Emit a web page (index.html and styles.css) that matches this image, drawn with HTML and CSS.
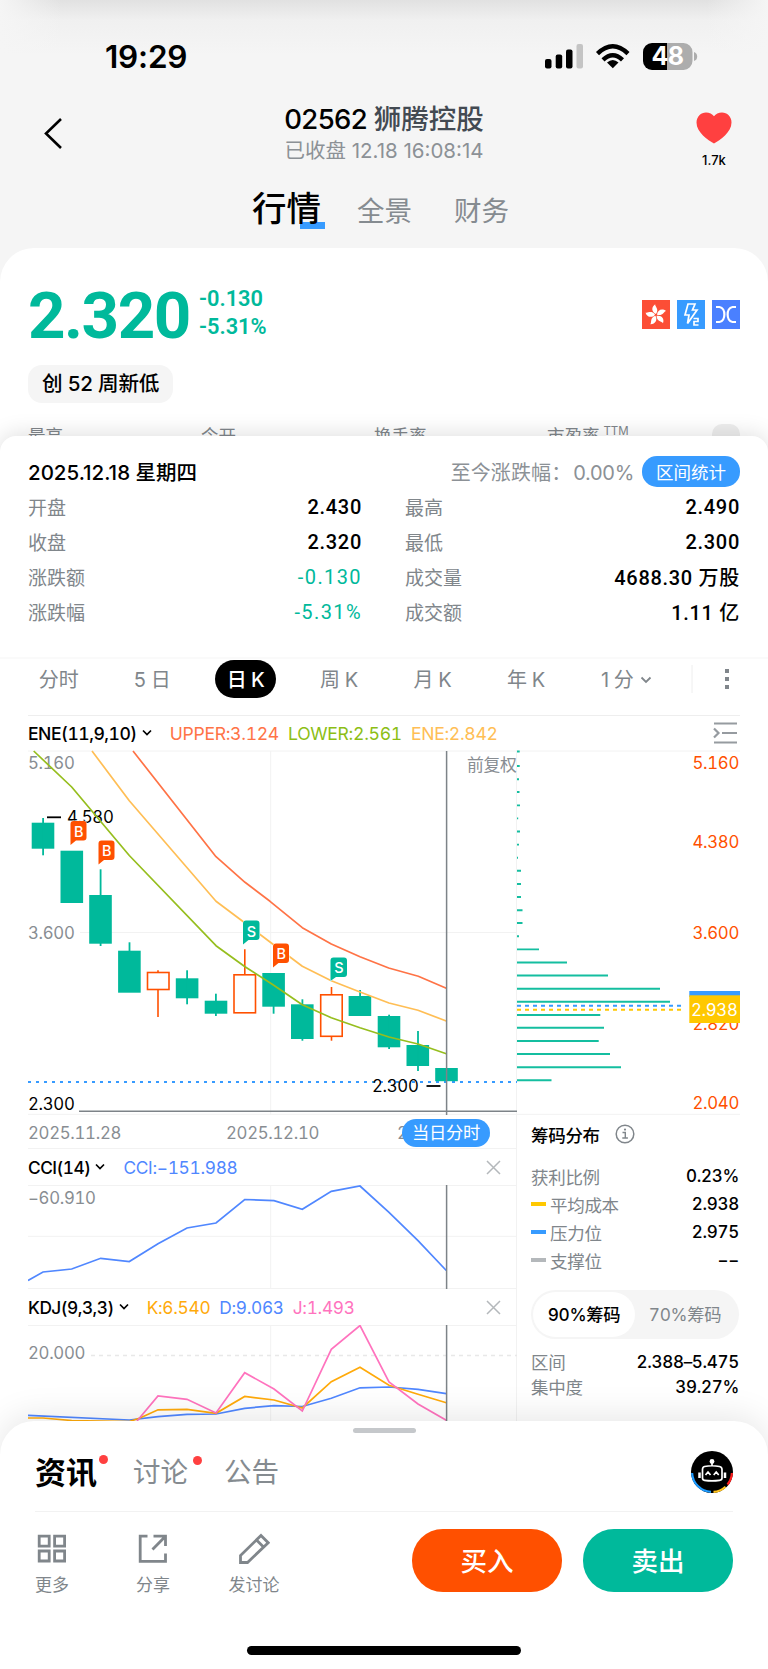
FILE: index.html
```html
<!DOCTYPE html>
<html lang="zh-CN">
<head>
<meta charset="UTF-8"/>
<meta name="viewport" content="width=device-width,initial-scale=1"/>
<title>02562 狮腾控股</title>
<link rel="stylesheet" href="styles.css">
</head>
<body>
<header class="top">
  <div class="status">
    <span class="clock">19:29</span>
    <svg class="status-icons" width="154" height="30" viewBox="544 42 154 30">
      <rect x="545" y="59" width="6.5" height="9.5" rx="2"/>
      <rect x="555.7" y="54.5" width="6.5" height="14" rx="2"/>
      <rect x="566" y="49.5" width="6.5" height="19" rx="2"/>
      <rect x="576.5" y="44" width="6.5" height="24.5" rx="2" fill="#c4c4c4"/>
      <g fill="none" stroke="#000" stroke-width="4.4">
        <path d="M597.5 53.6Q612.8 39 628 53.6"/>
        <path d="M603 59.8Q612.8 50.6 622.5 59.8"/>
      </g>
      <path d="M612.8 68.3L607 62.6Q612.8 57.6 618.5 62.6Z"/>
      <path d="M667 43H652a9 9 0 0 0-9 9v9a9 9 0 0 0 9 9h15z"/>
      <path d="M667 43h16.500a9 9 0 0 1 9 9v9a9 9 0 0 1-9 9H667zM694 52q3.200 1 3.200 4.500t-3.200 4.500z" fill="#adadad"/>
      <text x="667.500" y="65" class="batt">48</text>
    </svg>
  </div>
  <div class="nav">
    <svg class="back" width="20" height="34" viewBox="0 0 20 34"><path d="M18 3L3 17.500L18 32" fill="none" stroke="#000" stroke-width="2.600"/></svg>
    <div class="title">
      <h1>02562 <b>狮腾控股</b></h1>
      <p>已收盘 12.18 16:08:14</p>
    </div>
    <div class="fav">
      <svg width="36" height="32" viewBox="0 0 36 32"><path d="M18 31.500C12 28 .5 20.500.5 10.500C.5 4.500 5 .5 10 .5c3.500 0 6.200 1.600 8 3.800C19.800 2.100 22.500.5 26 .5c5 0 9.500 4 9.500 10C35.500 20.500 24 28 18 31.500z" fill="#ff4040"/></svg>
      <span>1.7k</span>
    </div>
  </div>
  <nav class="pages">
    <span class="on">行情</span><span>全景</span><span>财务</span>
  </nav>
</header>

<section class="quote">
  <div class="price-row">
    <div class="price">2.320</div>
    <div class="chg"><span>-0.130</span><span>-5.31%</span></div>
    <div class="marks">
      <svg width="28" height="29" viewBox="0 0 28 29"><rect width="28" height="29" fill="#fc4e36"/>
        <g fill="#fff">
          <path d="M14 14C9.500 12 9 7 13.200 4.200C12.800 6.500 17.500 9 14 14z"/>
          <path d="M14 14C9.500 12 9 7 13.200 4.200C12.800 6.500 17.500 9 14 14z" transform="rotate(72 14 15)"/>
          <path d="M14 14C9.500 12 9 7 13.200 4.200C12.800 6.500 17.500 9 14 14z" transform="rotate(144 14 15)"/>
          <path d="M14 14C9.500 12 9 7 13.200 4.200C12.800 6.500 17.500 9 14 14z" transform="rotate(216 14 15)"/>
          <path d="M14 14C9.500 12 9 7 13.200 4.200C12.800 6.500 17.500 9 14 14z" transform="rotate(288 14 15)"/>
        </g></svg>
      <svg width="28" height="29" viewBox="0 0 28 29"><rect width="28" height="29" fill="#379bff"/>
        <path d="M11 4h7l-2.500 6H20L10.500 23.500L12 15H8z" fill="none" stroke="#fff" stroke-width="1.700"/>
        <path d="M16.500 18.500h4.500v3h-4v3.500h4.500" fill="none" stroke="#fff" stroke-width="1.700"/></svg>
      <svg width="28" height="29" viewBox="0 0 28 29"><rect width="28" height="29" fill="#4a80ff"/>
        <path d="M4 7h3.500c6.500 1 6.500 14 0 15H4M24 7h-3.500c-6.500 1-6.500 14 0 15H24" fill="none" stroke="#fff" stroke-width="2.200"/></svg>
    </div>
  </div>
  <span class="tag">创 52 周新低</span>
  <div class="stats"><span>最高</span><span>今开</span><span>换手率</span><span>市盈率 <sup>TTM</sup></span><i></i></div>
</section>

<section class="detail">
  <div class="day">
    <strong>2025.12.18 星期四</strong>
    <span class="since">至今涨跌幅：<em>0.00%</em></span>
    <button class="range">区间统计</button>
  </div>
  <dl class="ohlc">
    <div><dt>开盘</dt><dd>2.430</dd></div>
    <div><dt>最高</dt><dd>2.490</dd></div>
    <div><dt>收盘</dt><dd>2.320</dd></div>
    <div><dt>最低</dt><dd>2.300</dd></div>
    <div><dt>涨跌额</dt><dd class="down">-0.130</dd></div>
    <div><dt>成交量</dt><dd>4688.30 万股</dd></div>
    <div><dt>涨跌幅</dt><dd class="down">-5.31%</dd></div>
    <div><dt>成交额</dt><dd>1.11 亿</dd></div>
  </dl>
</section>

<nav class="period">
  <span>分时</span><span>5 日</span><span class="on">日 K</span><span>周 K</span><span>月 K</span><span>年 K</span>
  <span class="minute">1 分<svg width="12" height="8" viewBox="0 0 12 8"><path d="M1.500 1.500L6 6l4.500-4.500" fill="none" stroke="#80868b" stroke-width="1.800"/></svg></span>
  <svg class="more" width="40" height="30" viewBox="0 0 40 30"><path d="M1 1v28" stroke="#eee"/><g fill="#80868b"><rect x="34" y="5" width="4" height="4"/><rect x="34" y="13" width="4" height="4"/><rect x="34" y="21" width="4" height="4"/></g></svg>
</nav>

<section class="kline">
  <div class="legend ene">
    <span class="name">ENE(11,9,10)</span>
    <svg width="10" height="8" viewBox="0 0 10 8"><path d="M1 1.500l4 4 4-4" fill="none" stroke="#000" stroke-width="1.700"/></svg>
    <span class="upper">UPPER:3.124</span><span class="lower">LOWER:2.561</span><span class="mid">ENE:2.842</span>
    <svg class="fold" width="25" height="22" viewBox="0 0 25 22"><path d="M1 1.500h23M9 11h15M1 20.500h23M1 6.500L5.500 11L1 15.500" fill="none" stroke="#969ba0" stroke-width="2.200"/></svg>
  </div>

  <div class="panes">
    <div class="left">
      <svg class="plot" width="489" height="365" viewBox="28 750 489 365">
        <path class="grid" d="M28 751H517M80 932.500H517M28 1114.300H517M270.700 751V1115"/>
        <text class="ax" x="28" y="769">5.160</text>
        <text class="ax" x="28" y="938.500">3.600</text>
        <text class="ax" x="516.500" y="770.500" text-anchor="end">前复权</text>
        <text class="ax dark" x="67" y="823">4.580</text>
        <path d="M47 817.300h14" stroke="#000" stroke-width="1.800"/>
        <!-- falling candles -->
        <g fill="#00b99b">
          <rect x="31.7" y="822.7" width="22.600" height="26"/><rect x="42.200" y="818" width="1.800" height="37.300"/>
          <rect x="60.500" y="850.700" width="22.600" height="52.300"/>
          <rect x="89.200" y="895" width="22.600" height="48.700"/><rect x="99.700" y="869.300" width="1.800" height="76.700"/>
          <rect x="118.100" y="950.700" width="22.600" height="42"/><rect x="128.600" y="942.300" width="1.800" height="10"/>
          <rect x="175.800" y="978.300" width="22.600" height="20"/><rect x="186.200" y="970.300" width="1.800" height="34"/>
          <rect x="204.700" y="1000.700" width="22.600" height="13"/><rect x="215" y="993.700" width="1.800" height="22.300"/>
          <rect x="262.300" y="973" width="22.600" height="33.700"/><rect x="272.700" y="1006" width="1.800" height="7.700"/>
          <rect x="291" y="1004.300" width="22.600" height="34.700"/><rect x="301.500" y="999.300" width="1.800" height="41.400"/>
          <rect x="348.600" y="996" width="22.600" height="20"/><rect x="359.200" y="990" width="1.800" height="7"/>
          <rect x="377.700" y="1016" width="22.600" height="31.300"/><rect x="388.200" y="1014.700" width="1.800" height="34.300"/>
          <rect x="406.500" y="1045" width="22.600" height="21"/><rect x="417.100" y="1031" width="1.800" height="40"/>
        </g>
        <!-- rising candles -->
        <g fill="#fff" stroke="#ff5000" stroke-width="1.600">
          <path d="M158 970.300V1017"/><rect x="147.500" y="972.500" width="21.500" height="17"/>
          <path d="M244.800 949.300V975"/><rect x="234" y="974.800" width="21.500" height="38"/>
          <path d="M331.500 987V1040.700"/><rect x="320.700" y="994.800" width="21.500" height="41.500"/>
        </g>
        <path d="M28 1082H517" stroke="#379bff" stroke-width="2" stroke-dasharray="3 5"/>
        <rect x="435.200" y="1068" width="22.600" height="13.200" fill="#00b99b"/>
        <g fill="none" stroke-width="1.700" stroke-linejoin="round">
          <path stroke="#ff7346" d="M133 751L216 856.700L245 882.300L270 901.300L302.300 927.700L331.300 944L360 956.700L388.700 968L418.300 976.300L446.300 988.300"/>
          <path stroke="#ffbe55" d="M92 751L129.300 800.700L216 901.300L245 923L270 942L302.300 966.300L331.300 980.700L360 992L389 1003L418 1010.300L446.300 1021"/>
          <path stroke="#96be1e" d="M33.700 751L71.700 787L129.300 855.500L216 945.700L245 966.700L273 984.700L302.300 1004.700L331.300 1017.700L360 1027.700L389 1037L418 1044L446.300 1053.700"/>
        </g>
        <!-- trade markers -->
        <g class="mk">
          <path class="buy" d="M70.500 845V824q0-3 3-3h10q3 0 3 3v13.500q0 3-3 3h-7.500z"/><text x="78.700" y="836.500">B</text>
          <path class="buy" d="M98.500 864.500V843.500q0-3 3-3h10q3 0 3 3v13.500q0 3-3 3h-7.500z"/><text x="106.700" y="856">B</text>
          <path class="sell" d="M243 944.500V923.500q0-3 3-3h10.500q3 0 3 3v13.500q0 3-3 3h-8z"/><text x="251.300" y="936.500">S</text>
          <path class="buy" d="M273 967.500V946.500q0-3 3-3h10q3 0 3 3v13.500q0 3-3 3h-7.500z"/><text x="281.200" y="959">B</text>
          <path class="sell" d="M330.500 981V960.500q0-3 3-3h10.500q3 0 3 3v13.500q0 3-3 3h-8z"/><text x="338.800" y="973">S</text>
        </g>
        <path class="cross" d="M446.600 751V1115M79 1111.300H517"/>
        <text class="ax dark" x="372" y="1092">2.300</text>
        <path d="M426.500 1086h14" stroke="#000" stroke-width="1.800"/>
        <text class="ax dark" x="28" y="1109.500">2.300</text>
      </svg>
      <div class="dates"><span>2025.11.28</span><span>2025.12.10</span><span>2025.12.18</span><b>当日分时</b></div>

      <div class="legend">
        <span class="name">CCI(14)</span>
        <svg width="10" height="8" viewBox="0 0 10 8"><path d="M1 1.500l4 4 4-4" fill="none" stroke="#000" stroke-width="1.700"/></svg>
        <span class="blue">CCI:−151.988</span>
        <svg class="close" width="15" height="15" viewBox="0 0 15 15"><path d="M1 1l13 13M14 1L1 14" stroke="#b4b8bb" stroke-width="1.500"/></svg>
      </div>
      <svg class="plot" width="489" height="104" viewBox="28 1185 489 104">
        <path class="grid" d="M28 1185.500H517M28 1236.300H517M28 1288.500H517M270.700 1185V1289"/>
        <text class="ax" x="28" y="1203.500">−60.910</text>
        <path fill="none" stroke="#5087ff" stroke-width="1.700" d="M28 1280.500L43 1272L71.700 1269L100.700 1258.300L129.300 1261.500L158 1243.700L187 1228L216 1223L244.700 1199.500L274 1200.700L302.300 1209.300L331.300 1191.300L360 1186L389 1212.300L418 1240.700L446.300 1270.500"/>
        <path class="cross" d="M446.600 1185V1289"/>
      </svg>

      <div class="legend kdj">
        <span class="name">KDJ(9,3,3)</span>
        <svg width="10" height="8" viewBox="0 0 10 8"><path d="M1 1.500l4 4 4-4" fill="none" stroke="#000" stroke-width="1.700"/></svg>
        <span class="k">K:6.540</span><span class="blue">D:9.063</span><span class="j">J:1.493</span>
        <svg class="close" width="15" height="15" viewBox="0 0 15 15"><path d="M1 1l13 13M14 1L1 14" stroke="#b4b8bb" stroke-width="1.500"/></svg>
      </div>
      <svg class="plot" width="489" height="96" viewBox="28 1325 489 96">
        <path class="grid" d="M28 1325.500H517M270.700 1325V1421"/>
        <path d="M91 1355.500H517" stroke="#e8e8e8" stroke-width="1.300" stroke-dasharray="4 4"/>
        <text class="ax" x="28" y="1359">20.000</text>
        <g fill="none" stroke-width="1.700">
          <path stroke="#5087ff" d="M28 1415.300L129.300 1420L158 1416.700L187 1414.300L216 1414L244.700 1408.300L274 1405.700L302.300 1406.500L331.300 1398.300L360 1387.800L389 1387L418 1389.300L446.300 1393.700"/>
          <path stroke="#ffaa0a" d="M28 1418L43 1418L71.700 1420.500L129.300 1421.500L140 1418L158 1409.800L187 1409.300L216 1413.300L244.700 1396.500L274 1400L302.300 1408L331.300 1381.700L360 1367.300L389 1385.300L418 1394.300L446.300 1402.700"/>
          <path stroke="#ff73be" d="M137 1421L158 1396L187 1399.300L216 1413L244.700 1372.700L274 1389L302.300 1411L331.300 1349.300L360 1325.500L389 1382L418 1404L446.300 1420.300"/>
        </g>
        <path class="cross" d="M446.600 1325V1421"/>
      </svg>
    </div>

    <aside class="right">
      <svg class="plot" width="223" height="365" viewBox="517 750 223 365">
        <path class="grid" d="M517 751H740M517 1114.300H740"/>
        <!-- cost distribution -->
        <path stroke="#14bea0" stroke-width="1.900" d="M517 751.500h2.700M517 766h2.700M517 779.300h2M517 792h2.500M517 805.400h3M517 818.400h1.200M517 831.500h3M517 844.600h2M517 857.700h1M517 870.800h4M517 884h4M517 897h4M517 910.300h5.500M517 923h5.500M517 936.300h2M517 949.400h22M517 962.500h50M517 975.500h91M517 988.700h143M517 1001.800h153M517 1015h83.300M517 1027.800h87M517 1041h81.700M517 1054h93M517 1067.300h104M517 1080.200h34.500"/>
        <path stroke="#379bff" stroke-width="2" stroke-dasharray="4 4" d="M517 1005.800H685"/>
        <path stroke="#ffc800" stroke-width="2" stroke-dasharray="4 4" d="M517 1009.800H685"/>
        <g class="scale">
          <text x="739" y="769">5.160</text><text x="739" y="847.500">4.380</text><text x="739" y="938.500">3.600</text>
          <text x="739" y="1029.500">2.820</text><text x="739" y="1109">2.040</text>
        </g>
        <rect x="689.300" y="991" width="50.700" height="6" fill="#379bff"/>
        <rect x="689.300" y="995.300" width="50.700" height="27.700" fill="#ffc800"/>
        <text class="avg" x="737.500" y="1015.500">2.938</text>
      </svg>
      <div class="chips">
        <h3>筹码分布
          <svg width="20" height="20" viewBox="0 0 20 20"><circle cx="10" cy="10" r="8.800" fill="none" stroke="#80868b" stroke-width="1.500"/><path d="M7.500 8.500h2.800v5.500M7.300 14h5.600" fill="none" stroke="#80868b" stroke-width="1.400"/><circle cx="10" cy="5.600" r="1.100" fill="#80868b"/></svg>
        </h3>
        <ul>
          <li>获利比例<b>0.23%</b></li>
          <li><i class="y"></i>平均成本<b>2.938</b></li>
          <li><i class="b"></i>压力位<b>2.975</b></li>
          <li><i class="g"></i>支撑位<b>−−</b></li>
        </ul>
        <div class="seg"><span class="on">90%筹码</span><span>70%筹码</span></div>
        <ul class="tight">
          <li>区间<b>2.388–5.475</b></li>
          <li>集中度<b>39.27%</b></li>
        </ul>
      </div>
    </aside>
  </div>
</section>

<footer class="sheet">
  <div class="grip"></div>
  <div class="feeds">
    <span class="on dot">资讯</span><span class="dot">讨论</span><span>公告</span>
    <svg width="42" height="42" viewBox="0 0 42 42">
      <circle cx="21" cy="21" r="21"/>
      <g fill="none" stroke-width="2.200">
        <path stroke="#1e9bff" d="M1.100 22A19.900 19.900 0 0 0 20 40.900"/>
        <path stroke="#ffc31e" d="M22.500 40.900A19.900 19.900 0 0 0 34.500 35.700"/>
        <path stroke="#ff1e1e" d="M36.500 33.500A19.900 19.900 0 0 0 40.900 22"/>
      </g>
      <g fill="none" stroke="#fff" stroke-width="1.700">
        <path d="M13.500 15.500Q21 14 28.500 15.500Q31 16 31 18.500V27Q31 29 28.500 29.300Q21 30.300 13.500 29.300Q11.500 29 11.500 27V18.500Q11.500 16 13.500 15.500zM21 15V11M14.500 24l2.500-3 2.500 3M22.700 24l2.500-3 2.500 3"/>
        <path d="M8.500 21.500v5.500M34 21.500v5.500" stroke-width="2.500"/>
      </g>
      <circle cx="21" cy="10.500" r="2.400" fill="#fff"/>
    </svg>
  </div>
  <div class="actions">
    <div class="act"><svg width="32" height="32" viewBox="0 0 32 32"><path d="M3.200 3.200h10v10h-10zM18.600 3.200h10v10h-10zM3.200 18h10v10h-10zM18.600 18h10v10h-10z"/></svg>更多</div>
    <div class="act"><svg width="32" height="32" viewBox="0 0 32 32"><path d="M10.500 3.200H3.200V28.300H28.500V20.500M16.500 3.200h12V13M28.500 3.200L15.500 16.500"/></svg>分享</div>
    <div class="act"><svg width="32" height="32" viewBox="0 0 32 32"><path d="M23 2.500l7.200 7.200L9.500 29.500H2.500V22.500zM18.500 7l7 7"/></svg>发讨论</div>
    <button class="buy-btn">买入</button>
    <button class="sell-btn">卖出</button>
  </div>
  <div class="home"></div>
</footer>
</body>
</html>
```

FILE: styles.css
```css
*{box-sizing:border-box;margin:0;padding:0}
body{width:768px;height:1669px;overflow:hidden;background:#f5f5f5;font-family:Inter,"Noto Sans CJK SC",sans-serif;color:#000}
svg{display:block;flex:none}
button{border:none;font-family:inherit}
span,b,strong,dt,dd,p,h1,h3,li,button{white-space:nowrap}

.top{height:248px;background:linear-gradient(90deg,#f5f5f5,rgba(245,245,245,0) 8%,rgba(245,245,245,0) 92%,#f5f5f5),linear-gradient(#e1e1e1,#f0f0f0 20px,#f5f5f5 55px)}
.status{height:88px;padding:42px 70px 0 105px;display:flex;justify-content:space-between}
.clock{font-size:31.500px;font-weight:600;line-height:30px;letter-spacing:-.2px}
.batt{font-size:25px;font-weight:700;fill:#fff;text-anchor:middle;letter-spacing:-.5px}
.nav{height:84px;padding:0 29px 0 43px;display:flex;align-items:flex-start}
.back{margin-top:28px}
.title{flex:1;text-align:center;padding:12px 0 0 16px}
.title h1{font-size:27.5px;line-height:38px;font-weight:500;letter-spacing:-.6px}
.title h1 b{font-weight:500;color:#434a52;letter-spacing:0}
.title p{font-size:20.500px;line-height:26px;color:#8c9196}
.fav{width:50px;margin-top:24px;display:flex;flex-direction:column;align-items:center}
.fav span{font-size:13px;line-height:16px;font-weight:500;margin-top:8px}
.pages{height:76px;display:flex;align-items:baseline;padding:14px 0 0 252px;font-size:27.500px;line-height:46px;color:#858b90}
.pages span{margin-right:42px}
.pages .on{font-size:34.500px;font-weight:500;color:#000;margin-right:32px;padding-right:4px;background:linear-gradient(#379bff,#379bff) 100% 36px/25px 7px no-repeat}

.quote{height:210px;margin-bottom:-22px;background:#fff;border-radius:34px 34px 0 0;padding:35px 28px 0}
.price-row{display:flex;height:66px}
.price{width:171px;font:700 65.500px/66px Roboto;letter-spacing:-1.500px;color:#00b99b}
.chg{display:flex;flex-direction:column;font:600 21.800px/28px Roboto;color:#00b99b;padding-top:2px}
.marks{display:flex;gap:7px;margin:17px 0 0 auto}
.tag{display:inline-block;height:38px;margin-top:16px;padding:0 14px;border-radius:14px;background:#f5f5f5;font-size:20.600px;line-height:38px;font-weight:500;letter-spacing:-.2px}
.stats{display:grid;grid-template-columns:173px 173px 173px 1fr 28px;height:28px;margin-top:17px;font-size:17.500px;line-height:31px;color:#80868b}
.stats sup{font-size:11.500px;line-height:0;vertical-align:7px;margin-left:-1px}
.stats i{height:30px;background:#eee;border-radius:10px;margin-top:4px}

.detail{position:relative;height:221px;background:#fff;border-radius:16px 16px 0 0;padding:19px 28px 0;box-shadow:0 -2px 22px rgba(0,0,0,.13)}
.day{display:flex;align-items:center;height:32px}
.day strong{font-size:20.500px;font-weight:500}
.since{margin-left:auto;font-size:20px;color:#8c9196;letter-spacing:.1px}
.since em{font-style:normal;letter-spacing:-.3px;margin-left:2px}
.range{width:98px;height:31px;margin-left:8px;border-radius:15px;background:#379bff;color:#fff;font-size:17.500px}
.ohlc{display:grid;grid-template-columns:334px 335px;column-gap:43px;grid-auto-rows:35px;margin-top:2px}
.ohlc div{display:flex;justify-content:space-between;align-items:center;font-size:19px}
.ohlc dt{color:#80868b}
.ohlc dd{font:500 20px Roboto,"Noto Sans CJK SC";letter-spacing:.7px}
.ohlc .down{color:#00b99b;font-weight:400;letter-spacing:1.400px}

.period{position:relative;display:flex;align-items:center;height:58px;padding:0 20px 17px 12px;background:#fff;border-top:2px solid #fafafa;font-size:20px;color:#80868b}
.period span{width:93.500px;display:flex;align-items:center;justify-content:center;white-space:pre;word-spacing:-1px}
.period span svg{margin:3px 0 0 6px}
.period .minute{justify-content:flex-end;width:79px}
.period .on{width:61px;height:38px;margin:0 16.200px;border-radius:19px;background:#000;color:#fff;font-weight:500}
.more{margin:0 17px 0 auto}

.kline{height:740px;margin-bottom:-34px;background:#fff;padding:0 28px;font-variant-numeric:tabular-nums;letter-spacing:-.3px}
.legend{display:flex;align-items:center;height:36px;font-size:17.300px}
.legend .name{margin-right:5px;font-weight:500;letter-spacing:-.5px}
.legend.ene{height:35px;border-top:1px solid #eee;font-size:17.600px}
.legend svg+span{margin-left:18px}
.legend span+span{margin-left:9px}
.fold,.close{margin-left:auto}
.fold{margin-right:2px}
.close{margin-right:15px}
.upper{color:#ff7346}
.lower{color:#8cbe14}
.mid{color:#ffbe55}
.blue{color:#5087ff}
.k{color:#ffaa0a}
.j{color:#ff73be}

.panes{display:flex;height:671px}
.left{width:489px;border-right:1px solid #f2f2f2}
.right{width:223px}
.grid{stroke:#f2f2f2;fill:none}
.ax{font-size:16.800px;fill:#888d92}
.ax.dark{fill:#000}
.cross{stroke:#7d8388;stroke-width:1.500;fill:none}
.buy{fill:#ff5000}
.sell{fill:#00b99b}
.mk path{stroke:#fff;stroke-width:1;paint-order:stroke}
.mk text{font-size:14.500px;font-weight:500;fill:#fff;text-anchor:middle}
.scale text{font-size:16.800px;fill:#ff5000;text-anchor:end}
.avg{font-size:16.800px;fill:#fff;text-anchor:end}
.dates{position:relative;display:grid;grid-template-columns:198px 171px 1fr;height:34px;border-bottom:1px solid #f2f2f2;font-size:16.800px;line-height:36px;color:#888d92}
.dates b{position:absolute;left:374px;top:4px;width:88px;height:28px;border-radius:14px;background:#379bff;color:#fff;font-size:17.300px;line-height:28px;font-weight:400;text-align:center}

.chips{padding:3px 1px 0 14px}
.chips h3{display:flex;align-items:center;gap:15px;height:32px;font-size:17.500px;font-weight:500}
.chips ul{list-style:none;margin-top:12px}
.chips li{display:flex;align-items:center;height:28px;font-size:17.500px;color:#80868b}
.chips li b{margin-left:auto;color:#000;font-size:17px;font-weight:500}
.chips li i{width:15px;height:4px;margin-right:4px}
.chips .y{background:#ffc800}
.chips .b{background:#379bff}
.chips .g{background:#b4b8bb}
.seg{display:flex;height:49px;margin-top:16px;padding:2px;border-radius:25px;background:#f5f5f5;font-size:17.300px;line-height:45px;text-align:center;color:#80868b}
.seg span{width:100px}
.seg .on{width:102px;background:#fff;border-radius:23px;color:#000;font-weight:500}
.chips .tight{margin-top:10px}
.tight li{height:25px}

.sheet{position:relative;height:248px;background:#fff;border-radius:34px 34px 0 0;padding:7px 35px 0;box-shadow:0 -4px 34px rgba(0,0,0,.1)}
.grip{width:63px;height:5px;margin:0 auto;border-radius:3px;background:#c5c8cb}
.feeds{display:flex;align-items:center;height:79px;border-bottom:1px solid #f2f2f2;font-size:27.500px;color:#858b90}
.feeds span{position:relative;top:-2px;margin-right:36px}
.feeds .on{font-size:31px;font-weight:700;color:#000}
.feeds .dot::after{content:"";position:absolute;right:-14px;top:6px;width:9px;height:9px;border-radius:50%;background:#ff4040}
.feeds .on.dot::after{right:-11px;top:7px}
.feeds svg{margin-left:auto}
.actions{display:flex;height:134px;padding-top:17px}
.act{display:flex;flex-direction:column;align-items:center;width:34px;margin:4px 67px 0 0;font-size:17px;line-height:24px;color:#80868b;white-space:nowrap}
.act:nth-child(3){width:52px;margin:4px 0 0 -9px}
.act svg{margin-bottom:8px;fill:none;stroke:#80868b;stroke-width:2.800}
.actions button{width:150px;height:63px;padding-bottom:3px;border-radius:31px;color:#fff;font-size:26.500px;font-weight:500}
.buy-btn{margin-left:auto;background:#ff5000}
.sell-btn{margin-left:21px;background:#00b99b}
.home{width:274px;height:9px;margin:0 auto;border-radius:5px;background:#000}
```
